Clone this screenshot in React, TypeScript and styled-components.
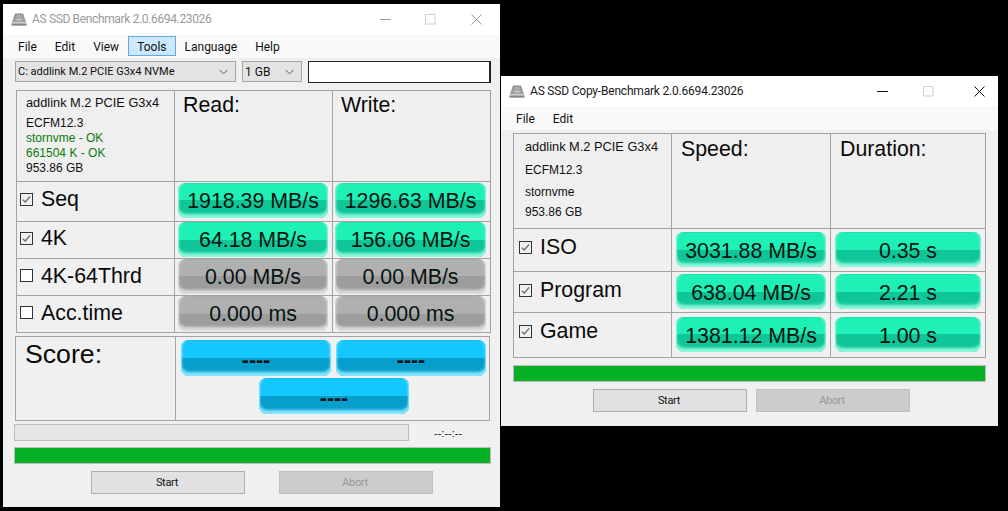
import React from "react";
import styled, { createGlobalStyle } from "styled-components";

const Global = createGlobalStyle`
  html, body { margin: 0; padding: 0; background: #000; }
  body { width: 1008px; height: 511px; overflow: hidden; font-family: "Liberation Sans", Arial, sans-serif; }
`;

const uiFont = `Roboto, "Noto Sans", sans-serif`;

const Desktop = styled.div`
  position: relative;
  width: 1008px;
  height: 511px;
  background: #000;
  overflow: hidden;
`;

const Win = styled.section<{ $x: number; $y: number; $h: number }>`
  position: absolute;
  left: ${(p) => p.$x}px;
  top: ${(p) => p.$y}px;
  width: 497px;
  height: ${(p) => p.$h}px;
  background: #f0f0f0;
  display: flex;
  flex-direction: column;
`;

const TitleBar = styled.header`
  height: 30px;
  flex: none;
  background: #fff;
  display: flex;
  align-items: center;
  padding-left: 8px;
`;

const TitleText = styled.span<{ $active?: boolean }>`
  margin-left: 5px;
  font: 12px/16px ${uiFont};
  letter-spacing: ${(p) => (p.$active ? "-0.2px" : "-0.35px")};
  color: ${(p) => (p.$active ? "#1a1a1a" : "#999")};
  flex: 1;
  white-space: nowrap;
`;

const Controls = styled.div<{ $right: number }>`
  display: flex;
  align-items: center;
  flex: none;
  margin-right: ${(p) => p.$right}px;
`;

const ControlIcon = styled.svg<{ $gap: number }>`
  display: block;
  width: 11px;
  height: 11px;
  margin-left: ${(p) => p.$gap}px;
`;

const MenuBar = styled.nav`
  height: 24px;
  flex: none;
  background: #f9f9f9;
  display: flex;
  align-items: center;
  padding-left: 6px;
`;

const MenuItem = styled.span<{ $hot?: boolean }>`
  height: 20px;
  box-sizing: border-box;
  padding: 1px 9px 0;
  display: flex;
  align-items: center;
  font: 12px ${uiFont};
  color: #111;
  background: ${(p) => (p.$hot ? "#cce8ff" : "transparent")};
  outline: ${(p) => (p.$hot ? "1px solid #66a7e8" : "none")};
  outline-offset: -1px;
`;

const Body = styled.div`
  flex: 1;
  display: flex;
  flex-direction: column;
  padding: 3px 0 0 12px;
`;

const ComboRow = styled.div`
  display: flex;
  height: 22px;
  gap: 6px;
  margin-bottom: 7px;
`;

const Combo = styled.div<{ $w: number; $size: number }>`
  width: ${(p) => p.$w}px;
  height: 21px;
  box-sizing: border-box;
  background: #e3e3e3;
  border: 1px solid #a6a6a6;
  display: flex;
  align-items: center;
  justify-content: space-between;
  padding: 0 7px 0 2px;
  font: ${(p) => p.$size}px ${uiFont};
  color: #111;
  white-space: nowrap;
`;

const Chevron = () => (
  <svg width="9" height="6" viewBox="0 0 9 6">
    <path d="M0.5 0.8 L4.5 4.8 L8.5 0.8" fill="none" stroke="#555" strokeWidth="1" />
  </svg>
);

const NameBox = styled.div`
  width: 183px;
  height: 22px;
  box-sizing: border-box;
  background: #fff;
  border: 1px solid #222;
  border-width: 1px 2px 1px 1px;
`;

const Table = styled.div<{ $cols: string; $rows: string; $ml?: number }>`
  display: grid;
  grid-template-columns: ${(p) => p.$cols};
  grid-template-rows: ${(p) => p.$rows};
  gap: 1px;
  padding: 1px;
  width: max-content;
  background: #a3a3a3;
  margin-left: ${(p) => p.$ml ?? 0}px;
`;

const InfoCell = styled.div<{ $pad: number; $left: number }>`
  background: #efefef;
  box-sizing: border-box;
  padding: ${(p) => p.$pad}px 0 0 ${(p) => p.$left}px;
`;

const InfoLine = styled.div<{ $ok?: boolean; $big?: boolean; $after?: number }>`
  font-size: ${(p) => (p.$big ? 12.8 : 12)}px;
  line-height: 15px;
  white-space: nowrap;
  color: ${(p) => (p.$ok ? "#0a7d0a" : "#111")};
  margin-bottom: ${(p) => p.$after ?? 0}px;
`;

const HeadCell = styled.div<{ $top: number; $left: number }>`
  background: #efefef;
  padding: ${(p) => p.$top}px 0 0 ${(p) => p.$left}px;
  font-size: 21.33px;
  line-height: 26px;
  color: #0a0a0a;
`;

const LabelCell = styled.div<{ $top: number; $left: number }>`
  background: #f0f0f0;
  display: flex;
  align-items: flex-start;
  padding: ${(p) => p.$top}px 0 0 ${(p) => p.$left}px;
  font-size: 21.33px;
  line-height: 26px;
  color: #0a0a0a;
  white-space: nowrap;
`;

const CheckBox = styled.span<{ $on: boolean; $mt: number }>`
  width: 13px;
  height: 13px;
  box-sizing: border-box;
  flex: none;
  margin: ${(p) => p.$mt}px 8px 0 0;
  border: 1px solid #333;
  background: ${(p) => (p.$on ? "#f0f0f0" : "#fff")};
  display: flex;
`;

const Check = () => (
  <svg width="11" height="11" viewBox="0 0 11 11">
    <path d="M1.8 5.6 L4.2 8 L9.2 2.4" fill="none" stroke="#666" strokeWidth="1.3" />
  </svg>
);

const ValueCell = styled.div<{ $top: number; $left: number }>`
  background: #f0f0f0;
  display: flex;
  align-items: flex-start;
  padding: ${(p) => p.$top}px 0 0 ${(p) => p.$left}px;
`;

const palette = {
  green: { hi: "#1ef0b6", lo: "#0fc698", edge: "#8cf7da", top: "#16dcaa" },
  gray: { hi: "#b0b0b0", lo: "#9d9d9d", edge: "#dcdcdc", top: "#a4a4a4" },
  blue: { hi: "#14c8ff", lo: "#079ecb", edge: "#86e6ff", top: "#0db4e8" },
};

const Pill = styled.div<{ $tone: "green" | "gray" | "blue"; $w: number; $h?: number; $nudge?: number }>`
  width: ${(p) => p.$w}px;
  height: ${(p) => p.$h ?? 35}px;
  flex: none;
  box-sizing: border-box;
  border-radius: 8px;
  background: linear-gradient(
    ${(p) => palette[p.$tone].hi} 0,
    ${(p) => palette[p.$tone].hi} 50%,
    ${(p) => palette[p.$tone].lo} 50%,
    ${(p) => palette[p.$tone].lo} 100%
  );
  box-shadow: inset 0 -5px 3px -1px ${(p) => palette[p.$tone].edge},
    inset 2px 0 2px -1px ${(p) => palette[p.$tone].edge},
    inset -2px 0 2px -1px ${(p) => palette[p.$tone].edge},
    inset 0 1px 0 0 ${(p) => palette[p.$tone].top};
  display: flex;
  align-items: center;
  justify-content: center;
  padding-top: ${(p) => p.$nudge ?? 3}px;
  font-size: 21.33px;
  color: #061410;
  white-space: nowrap;
`;

const ScoreTable = styled.div`
  display: grid;
  grid-template-columns: 159px 313px;
  grid-template-rows: 83px;
  gap: 1px;
  padding: 1px;
  width: max-content;
  margin-top: 3px;
  background: #a3a3a3;
`;

const ScoreHead = styled.div`
  background: #f0f0f0;
  padding: 1px 0 0 9px;
  font-size: 26.67px;
  line-height: 32px;
  color: #0a0a0a;
`;

const ScoreCell = styled.div`
  background: #f0f0f0;
  display: flex;
  flex-wrap: wrap;
  justify-content: center;
  gap: 2px 5px;
  padding: 3px 3px 0 5px;
  align-content: flex-start;
  & > :nth-child(3) {
    margin-left: 1px;
  }
`;

const Dash = styled.span`
  font-size: 21.33px;
  font-weight: 700;
  line-height: 22px;
  color: #04141a;
`;

const TimeRow = styled.div`
  display: flex;
  align-items: center;
  margin: 3px 0 0 -1px;
`;

const Track = styled.div`
  width: 395px;
  height: 17px;
  box-sizing: border-box;
  border: 1px solid #bcbcbc;
  background: #e6e6e6;
`;

const TimeText = styled.span`
  margin-left: 25px;
  font-size: 11px;
  color: #222;
`;

const GreenBar = styled.div<{ $w: number; $mt: number; $ml: number }>`
  width: ${(p) => p.$w}px;
  height: 17px;
  flex: none;
  box-sizing: border-box;
  margin: ${(p) => p.$mt}px 0 0 ${(p) => p.$ml}px;
  border: 1px solid #bcbcbc;
  background: #06b025;
`;

const ButtonRow = styled.div<{ $left: number; $gap: number }>`
  display: flex;
  gap: ${(p) => p.$gap}px;
  margin: 7px 0 0 ${(p) => p.$left}px;
`;

const Btn = styled.div<{ $off?: boolean }>`
  width: 154px;
  height: 23px;
  box-sizing: border-box;
  border: 1px solid ${(p) => (p.$off ? "#bfbfbf" : "#adadad")};
  background: ${(p) => (p.$off ? "#cccccc" : "#e1e1e1")};
  color: ${(p) => (p.$off ? "#9a9a9a" : "#111")};
  display: flex;
  align-items: center;
  justify-content: center;
  padding-right: 2px;
  font: 11px ${uiFont};
  letter-spacing: -0.3px;
`;

const DriveIcon = () => (
  <svg width="16" height="13" viewBox="0 0 16 13">
    <defs>
      <linearGradient id="drv" x1="0" y1="0" x2="0" y2="1">
        <stop offset="0" stopColor="#8f8f8f" />
        <stop offset="0.7" stopColor="#a6a6a6" />
        <stop offset="0.76" stopColor="#d4d4d4" />
        <stop offset="1" stopColor="#5c5c5c" />
      </linearGradient>
    </defs>
    <path d="M4 0.5 H12 L15.5 10 V12.5 H0.5 V10 Z" fill="url(#drv)" />
    <path d="M6 2 H7 V4 H6 Z M8 2 H9 V4 H8 Z M10 2 H10.6 V4 H10 Z" fill="#d0d0d0" />
    <ellipse cx="8" cy="6.5" rx="3.2" ry="1.4" fill="#bdbdbd" />
  </svg>
);

const WinControls = ({ active, right, gaps }: { active?: boolean; right: number; gaps: [number, number] }) => {
  const c = active ? "#111" : "#999";
  return (
    <Controls $right={right}>
      <ControlIcon $gap={0} viewBox="0 0 11 11">
        <path d="M0 5.5 H11" stroke={c} strokeWidth="1" />
      </ControlIcon>
      <ControlIcon $gap={gaps[0]} viewBox="0 0 11 11">
        <rect x="0.5" y="0.5" width="9.5" height="9.5" fill="none" stroke="#d0d0d0" />
      </ControlIcon>
      <ControlIcon $gap={gaps[1]} viewBox="0 0 11 11">
        <path d="M0.5 0.5 L10.5 10.5 M10.5 0.5 L0.5 10.5" stroke={c} strokeWidth="1" />
      </ControlIcon>
    </Controls>
  );
};

type Row = {
  name: string;
  on: boolean;
  a: string;
  b: string;
  tone: "green" | "gray";
  top: number;
  label: number;
  box: number;
};

const mainRows: Row[] = [
  { name: "Seq", on: true, a: "1918.39 MB/s", b: "1296.63 MB/s", tone: "green", top: 1, label: 4, box: 7 },
  { name: "4K", on: true, a: "64.18 MB/s", b: "156.06 MB/s", tone: "green", top: 0, label: 3, box: 7 },
  { name: "4K-64Thrd", on: false, a: "0.00 MB/s", b: "0.00 MB/s", tone: "gray", top: 0, label: 4, box: 6 },
  { name: "Acc.time", on: false, a: "0.000 ms", b: "0.000 ms", tone: "gray", top: 0, label: 4, box: 6 },
];

const copyRows: Row[] = [
  { name: "ISO", on: true, a: "3031.88 MB/s", b: "0.35 s", tone: "green", top: 3, label: 5, box: 7 },
  { name: "Program", on: true, a: "638.04 MB/s", b: "2.21 s", tone: "green", top: 2, label: 5, box: 7 },
  { name: "Game", on: true, a: "1381.12 MB/s", b: "1.00 s", tone: "green", top: 4, label: 5, box: 7 },
];

export default function App() {
  return (
    <Desktop>
      <Global />
      <Win $x={3} $y={4} $h={503}>
        <TitleBar>
          <DriveIcon />
          <TitleText>AS SSD Benchmark 2.0.6694.23026</TitleText>
          <WinControls right={18} gaps={[34, 35]} />
        </TitleBar>
        <MenuBar>
          <MenuItem>File</MenuItem>
          <MenuItem>Edit</MenuItem>
          <MenuItem>View</MenuItem>
          <MenuItem $hot>Tools</MenuItem>
          <MenuItem>Language</MenuItem>
          <MenuItem>Help</MenuItem>
        </MenuBar>
        <Body>
          <ComboRow>
            <Combo $w={221} $size={11}>
              C: addlink M.2 PCIE G3x4 NVMe
              <Chevron />
            </Combo>
            <Combo $w={60} $size={12}>
              1 GB
              <Chevron />
            </Combo>
            <NameBox />
          </ComboRow>
          <Table $cols="157px 157px 157px" $rows="90px 39px 36px 36px 36px" $ml={1}>
            <InfoCell $pad={4} $left={9}>
              <InfoLine $big $after={6}>addlink M.2 PCIE G3x4</InfoLine>
              <InfoLine>ECFM12.3</InfoLine>
              <InfoLine $ok>stornvme - OK</InfoLine>
              <InfoLine $ok>661504 K - OK</InfoLine>
              <InfoLine>953.86 GB</InfoLine>
            </InfoCell>
            <HeadCell $top={1} $left={8}>Read:</HeadCell>
            <HeadCell $top={1} $left={8}>Write:</HeadCell>
            {mainRows.map((r) => (
              <React.Fragment key={r.name}>
                <LabelCell $top={r.label} $left={3}>
                  <CheckBox $on={r.on} $mt={r.box}>{r.on && <Check />}</CheckBox>
                  {r.name}
                </LabelCell>
                <ValueCell $top={r.top} $left={3}>
                  <Pill $tone={r.tone} $w={150} $nudge={2}>{r.a}</Pill>
                </ValueCell>
                <ValueCell $top={r.top} $left={2}>
                  <Pill $tone={r.tone} $w={151} $nudge={2}>{r.b}</Pill>
                </ValueCell>
              </React.Fragment>
            ))}
          </Table>
          <ScoreTable>
            <ScoreHead>Score:</ScoreHead>
            <ScoreCell>
              <Pill $tone="blue" $w={150} $h={36}><Dash>----</Dash></Pill>
              <Pill $tone="blue" $w={150} $h={36}><Dash>----</Dash></Pill>
              <Pill $tone="blue" $w={150} $h={36}><Dash>----</Dash></Pill>
            </ScoreCell>
          </ScoreTable>
          <TimeRow>
            <Track />
            <TimeText>--:--:--</TimeText>
          </TimeRow>
          <GreenBar $w={477} $mt={6} $ml={-1} />
          <ButtonRow $left={76} $gap={34}>
            <Btn>Start</Btn>
            <Btn $off>Abort</Btn>
          </ButtonRow>
        </Body>
      </Win>

      <Win $x={501} $y={76} $h={350}>
        <TitleBar>
          <DriveIcon />
          <TitleText $active>AS SSD Copy-Benchmark 2.0.6694.23026</TitleText>
          <WinControls active right={13} gaps={[35, 40]} />
        </TitleBar>
        <MenuBar>
          <MenuItem>File</MenuItem>
          <MenuItem>Edit</MenuItem>
        </MenuBar>
        <Body>
          <Table $cols="157px 158px 154px" $rows="94px 42px 40px 44px">
            <InfoCell $pad={5} $left={11}>
              <InfoLine $big $after={9}>addlink M.2 PCIE G3x4</InfoLine>
              <InfoLine $after={7}>ECFM12.3</InfoLine>
              <InfoLine $after={5}>stornvme</InfoLine>
              <InfoLine>953.86 GB</InfoLine>
            </InfoCell>
            <HeadCell $top={2} $left={9}>Speed:</HeadCell>
            <HeadCell $top={2} $left={9}>Duration:</HeadCell>
            {copyRows.map((r) => (
              <React.Fragment key={r.name}>
                <LabelCell $top={r.label} $left={5}>
                  <CheckBox $on={r.on} $mt={r.box}>{r.on && <Check />}</CheckBox>
                  {r.name}
                </LabelCell>
                <ValueCell $top={r.top} $left={4}>
                  <Pill $tone={r.tone} $w={150}>{r.a}</Pill>
                </ValueCell>
                <ValueCell $top={r.top} $left={4}>
                  <Pill $tone={r.tone} $w={146}>{r.b}</Pill>
                </ValueCell>
              </React.Fragment>
            ))}
          </Table>
          <GreenBar $w={473} $mt={7} $ml={0} />
          <ButtonRow $left={80} $gap={9}>
            <Btn>Start</Btn>
            <Btn $off>Abort</Btn>
          </ButtonRow>
        </Body>
      </Win>
    </Desktop>
  );
}
